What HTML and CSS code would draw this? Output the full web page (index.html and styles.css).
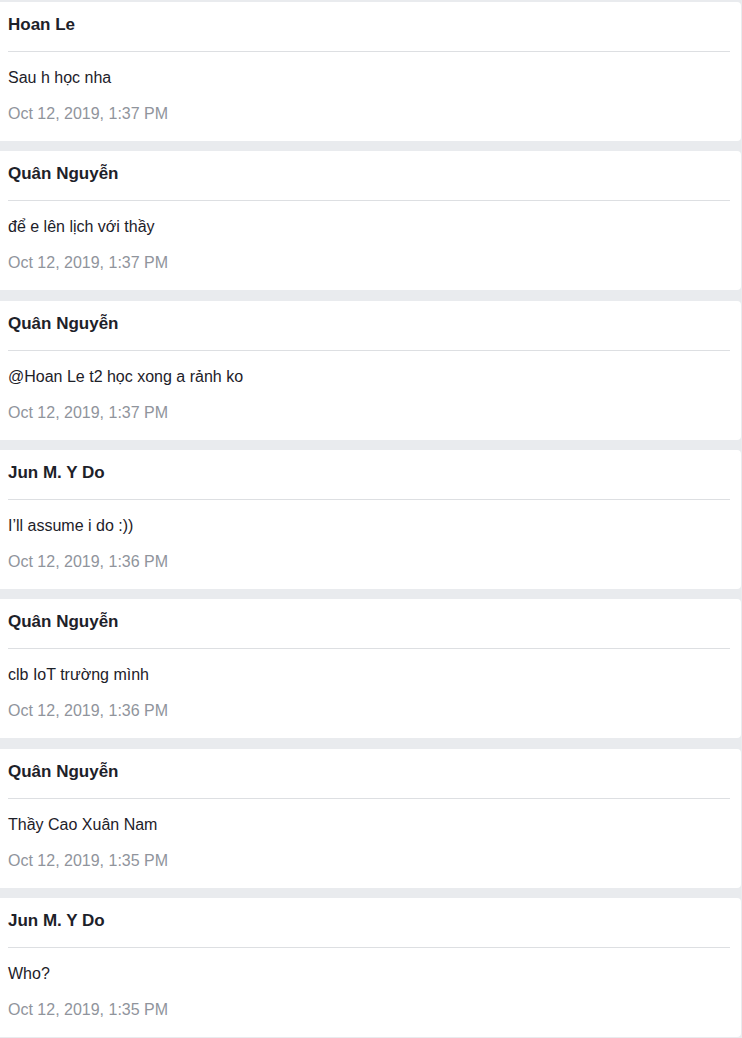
FILE: index.html
```html
<!DOCTYPE html>
<html>
<head>
<meta charset="utf-8">
<link rel="stylesheet" href="styles.css">
</head>
<body>
<div class="list">
  <div class="card">
    <div class="name">Hoan Le</div>
    <div class="msg">Sau h học nha</div>
    <div class="time">Oct 12, 2019, 1:37 PM</div>
  </div>
  <div class="card">
    <div class="name">Quân Nguyễn</div>
    <div class="msg">để e lên lịch với thầy</div>
    <div class="time">Oct 12, 2019, 1:37 PM</div>
  </div>
  <div class="card">
    <div class="name">Quân Nguyễn</div>
    <div class="msg">@Hoan Le t2 học xong a rảnh ko</div>
    <div class="time">Oct 12, 2019, 1:37 PM</div>
  </div>
  <div class="card">
    <div class="name">Jun M. Y Do</div>
    <div class="msg">I’ll assume i do :))</div>
    <div class="time">Oct 12, 2019, 1:36 PM</div>
  </div>
  <div class="card">
    <div class="name">Quân Nguyễn</div>
    <div class="msg">clb IoT trường mình</div>
    <div class="time">Oct 12, 2019, 1:36 PM</div>
  </div>
  <div class="card">
    <div class="name">Quân Nguyễn</div>
    <div class="msg">Thầy Cao Xuân Nam</div>
    <div class="time">Oct 12, 2019, 1:35 PM</div>
  </div>
  <div class="card">
    <div class="name">Jun M. Y Do</div>
    <div class="msg">Who?</div>
    <div class="time">Oct 12, 2019, 1:35 PM</div>
  </div>
</div>
</body>
</html>
```
FILE: styles.css
```css
html, body {
  margin: 0;
  padding: 0;
  background: #e9ebee;
  font-family: "Liberation Sans", Arial, sans-serif;
}
.list {
  display: flex;
  flex-direction: column;
  gap: 10.33px;
  padding-top: 2px;
  margin-right: 1px;
}
.card {
  background: #fff;
  border-radius: 0 4px 4px 0;
  padding: 0 11px 0 8px;
  height: 139px;
  box-sizing: border-box;
}
.name {
  font-weight: bold;
  font-size: 17px;
  line-height: 22px;
  color: #1d2129;
  padding: 12px 0 15px;
  border-bottom: 1px solid #dddfe2;
}
.msg {
  font-size: 16px;
  line-height: 20px;
  color: #1d2129;
  margin-top: 16px;
}
.time {
  font-size: 16px;
  line-height: 20px;
  color: #90949c;
  margin-top: 16px;
}
```
